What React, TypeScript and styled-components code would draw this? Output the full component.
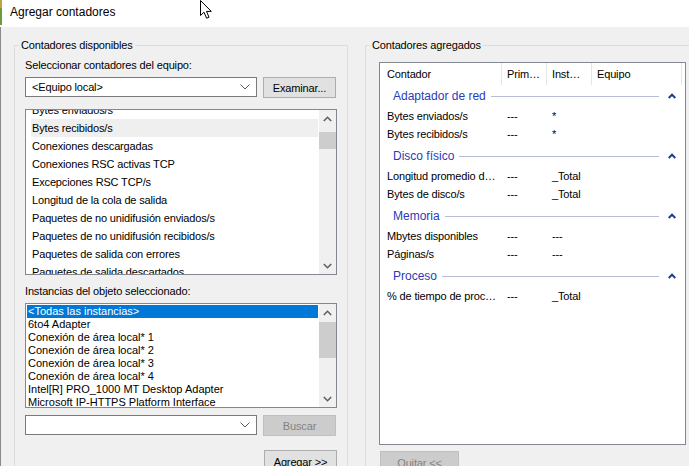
import React from "react";
import styled, { createGlobalStyle } from "styled-components";

const GlobalStyle = createGlobalStyle`
  html, body { margin: 0; padding: 0; background: #f0f0f0; overflow: hidden; }
  body { font-family: "Liberation Sans", Arial, sans-serif; font-size: 11px; color: #000; }
  * { box-sizing: border-box; }
`;

const Viewport = styled.div`
  position: relative;
  width: 689px;
  height: 466px;
  overflow: hidden;
  background: #f0f0f0;
`;

const Window = styled.div`
  width: 711px;
  display: flex;
  flex-direction: column;
`;

const TitleBar = styled.div`
  height: 27px;
  background: #ffffff;
  display: flex;
  align-items: flex-start;
`;

const DesktopEdge = styled.div`
  width: 2px;
  height: 25px;
  background: linear-gradient(#b9a53a 0 30%, #6f9a3c 30% 100%);
`;

const TitleText = styled.div`
  margin-left: 8px;
  padding-top: 5px;
  font-size: 12px;
  line-height: 15px;
  color: #000;
`;

const Body = styled.div`
  border-left: 1px solid #8a8a8a;
  padding: 11px 13px 0 13px;
  display: flex;
  align-items: flex-start;
  gap: 17px;
  min-height: 460px;
`;

const GroupBox = styled.fieldset<{ $w: number; $pl: number; $pt: number }>`
  margin: 0;
  min-width: 0;
  width: ${(p) => p.$w}px;
  border: 1px solid #dcdcdc;
  padding: ${(p) => p.$pt}px 10px 30px ${(p) => p.$pl}px;
  display: flex;
  flex-direction: column;
`;

const GroupLegend = styled.legend<{ $ml: number }>`
  padding: 0 2px;
  margin-left: ${(p) => p.$ml}px;
  line-height: 14px;
  font-size: 11px;
  letter-spacing: -0.15px;
`;

const FieldLabel = styled.div<{ $mt?: number }>`
  line-height: 14px;
  letter-spacing: -0.15px;
  margin-top: ${(p) => p.$mt ?? 0}px;
  margin-bottom: 5px;
`;

const ControlRow = styled.div<{ $mt?: number; $mb?: number }>`
  display: flex;
  align-items: flex-start;
  gap: 6px;
  margin-top: ${(p) => p.$mt ?? 0}px;
  margin-bottom: ${(p) => p.$mb ?? 0}px;
`;

const ComboBox = styled.div`
  width: 232px;
  height: 20px;
  background: #ffffff;
  border: 1px solid #7a7a7a;
  display: flex;
  align-items: center;
  justify-content: space-between;
  padding: 0 6px;
  letter-spacing: -0.15px;
`;

const Button = styled.div<{ $w: number; $h: number; $disabled?: boolean }>`
  width: ${(p) => p.$w}px;
  height: ${(p) => p.$h}px;
  background: ${(p) => (p.$disabled ? "#cccccc" : "#e1e1e1")};
  border: 1px solid ${(p) => (p.$disabled ? "#bfbfbf" : "#adadad")};
  color: ${(p) => (p.$disabled ? "#838383" : "#000")};
  display: flex;
  align-items: center;
  justify-content: center;
  letter-spacing: -0.15px;
  flex: none;
`;

const ButtonRow = styled.div<{ $mt: number; $align: "flex-start" | "flex-end"; $ml?: number }>`
  display: flex;
  justify-content: ${(p) => p.$align};
  margin-top: ${(p) => p.$mt}px;
  margin-left: ${(p) => p.$ml ?? 0}px;
`;

const ListBox = styled.div<{ $h: number }>`
  height: ${(p) => p.$h}px;
  background: #ffffff;
  border: 1px solid #828790;
  display: flex;
`;

const ListViewport = styled.div<{ $pad: number }>`
  flex: 1;
  overflow: hidden;
  padding: ${(p) => p.$pad}px 1px 0 1px;
`;

const ScrolledItems = styled.div<{ $offset: number }>`
  display: flex;
  flex-direction: column;
  transform: translateY(${(p) => -p.$offset}px);
`;

const CounterItem = styled.div<{ $hover?: boolean }>`
  height: 18px;
  line-height: 18px;
  margin-left: 4px;
  padding-left: 1px;
  letter-spacing: -0.15px;
  white-space: nowrap;
  background: ${(p) => (p.$hover ? "#efefef" : "transparent")};
`;

const InstanceItem = styled.div<{ $selected?: boolean }>`
  height: 13px;
  line-height: 13px;
  padding-left: 1px;
  white-space: nowrap;
  background: ${(p) => (p.$selected ? "#0078d7" : "transparent")};
  color: ${(p) => (p.$selected ? "#ffffff" : "#000")};
`;

const Scrollbar = styled.div`
  width: 17px;
  background: #f0f0f0;
  display: flex;
  flex-direction: column;
  flex: none;
`;

const ScrollArrow = styled.div`
  height: 17px;
  display: flex;
  align-items: center;
  justify-content: center;
  flex: none;
`;

const ScrollTrack = styled.div`
  flex: 1;
  display: flex;
  flex-direction: column;
`;

const ScrollThumb = styled.div<{ $top: number; $h: number }>`
  margin-top: ${(p) => p.$top}px;
  height: ${(p) => p.$h}px;
  background: #cdcdcd;
`;

const ListView = styled.div`
  height: 383px;
  background: #ffffff;
  border: 1px solid #828790;
  display: flex;
  flex-direction: column;
`;

const HeaderRow = styled.div`
  height: 22px;
  display: flex;
  flex: none;
`;

const HeaderCell = styled.div<{ $w: number; $pl: number }>`
  width: ${(p) => p.$w}px;
  padding-left: ${(p) => p.$pl}px;
  border-right: 1px solid #e5e5e5;
  display: flex;
  align-items: center;
  letter-spacing: -0.15px;
  white-space: nowrap;
  overflow: hidden;
`;

const GroupHeader = styled.div<{ $first?: boolean }>`
  height: 22px;
  margin-top: ${(p) => (p.$first ? 0 : 2)}px;
  display: flex;
  align-items: center;
  padding-left: 13px;
  padding-right: 9px;
`;

const GroupTitle = styled.span`
  font-size: 12px;
  color: #2b3bb8;
  white-space: nowrap;
`;

const GroupLine = styled.div`
  flex: 1;
  height: 1px;
  background: #b9bdd6;
  margin: 1px 9px 0 5px;
`;

const DataRow = styled.div`
  height: 18px;
  display: flex;
  align-items: center;
`;

const DataCell = styled.div<{ $w: number; $pl: number }>`
  width: ${(p) => p.$w}px;
  padding-left: ${(p) => p.$pl}px;
  letter-spacing: -0.15px;
  white-space: nowrap;
  overflow: hidden;
`;

const CursorLayer = styled.svg`
  position: absolute;
  left: 199px;
  top: -1px;
`;

const ChevronDown = () => (
  <svg width="10" height="6" viewBox="0 0 10 6">
    <polyline points="0.5,0.5 5,5 9.5,0.5" fill="none" stroke="#5a5a5a" strokeWidth="1" />
  </svg>
);

const ScrollUp = () => (
  <svg width="9" height="6" viewBox="0 0 9 6">
    <polyline points="0.8,5 4.5,1.3 8.2,5" fill="none" stroke="#606060" strokeWidth="1.6" />
  </svg>
);

const ScrollDown = () => (
  <svg width="9" height="6" viewBox="0 0 9 6">
    <polyline points="0.8,1 4.5,4.7 8.2,1" fill="none" stroke="#606060" strokeWidth="1.6" />
  </svg>
);

const Collapse = () => (
  <svg width="8" height="6" viewBox="0 0 8 6">
    <polyline points="0.8,5 4,1.6 7.2,5" fill="none" stroke="#1b3a94" strokeWidth="2" />
  </svg>
);

const counters = [
  "Bytes enviados/s",
  "Bytes recibidos/s",
  "Conexiones descargadas",
  "Conexiones RSC activas TCP",
  "Excepciones RSC TCP/s",
  "Longitud de la cola de salida",
  "Paquetes de no unidifusión enviados/s",
  "Paquetes de no unidifusión recibidos/s",
  "Paquetes de salida con errores",
  "Paquetes de salida descartados",
];

const instances = [
  "<Todas las instancias>",
  "6to4 Adapter",
  "Conexión de área local* 1",
  "Conexión de área local* 2",
  "Conexión de área local* 3",
  "Conexión de área local* 4",
  "Intel[R] PRO_1000 MT Desktop Adapter",
  "Microsoft IP-HTTPS Platform Interface",
];

const cols = [
  { w: 122, pl: 7 },
  { w: 45, pl: 5 },
  { w: 45, pl: 5 },
  { w: 90, pl: 5 },
];

const groups: { name: string; rows: [string, string, string][] }[] = [
  {
    name: "Adaptador de red",
    rows: [
      ["Bytes enviados/s", "---", "*"],
      ["Bytes recibidos/s", "---", "*"],
    ],
  },
  {
    name: "Disco físico",
    rows: [
      ["Longitud promedio d…", "---", "_Total"],
      ["Bytes de disco/s", "---", "_Total"],
    ],
  },
  {
    name: "Memoria",
    rows: [
      ["Mbytes disponibles", "---", "---"],
      ["Páginas/s", "---", "---"],
    ],
  },
  {
    name: "Proceso",
    rows: [["% de tiempo de proc…", "---", "_Total"]],
  },
];

export default function App() {
  return (
    <Viewport>
      <GlobalStyle />
      <Window>
        <TitleBar>
          <DesktopEdge />
          <TitleText>Agregar contadores</TitleText>
        </TitleBar>
        <Body>
          <GroupBox $w={334} $pl={10} $pt={6}>
            <GroupLegend $ml={-6}>Contadores disponibles</GroupLegend>
            <FieldLabel>Seleccionar contadores del equipo:</FieldLabel>
            <ControlRow $mb={11}>
              <ComboBox>
                <span>&lt;Equipo local&gt;</span>
                <ChevronDown />
              </ComboBox>
              <Button $w={73} $h={21}>Examinar...</Button>
            </ControlRow>
            <ListBox $h={166}>
              <ListViewport $pad={0}>
                <ScrolledItems $offset={9}>
                  {counters.map((c, i) => (
                    <CounterItem key={c} $hover={i === 1}>
                      {c}
                    </CounterItem>
                  ))}
                </ScrolledItems>
              </ListViewport>
              <Scrollbar>
                <ScrollArrow>
                  <ScrollUp />
                </ScrollArrow>
                <ScrollTrack>
                  <ScrollThumb $top={5} $h={17} />
                </ScrollTrack>
                <ScrollArrow>
                  <ScrollDown />
                </ScrollArrow>
              </Scrollbar>
            </ListBox>
            <FieldLabel $mt={9}>Instancias del objeto seleccionado:</FieldLabel>
            <ListBox $h={105}>
              <ListViewport $pad={1}>
                <ScrolledItems $offset={0}>
                  {instances.map((c, i) => (
                    <InstanceItem key={c} $selected={i === 0}>
                      {c}
                    </InstanceItem>
                  ))}
                </ScrolledItems>
              </ListViewport>
              <Scrollbar>
                <ScrollArrow>
                  <ScrollUp />
                </ScrollArrow>
                <ScrollTrack>
                  <ScrollThumb $top={1} $h={36} />
                </ScrollTrack>
                <ScrollArrow>
                  <ScrollDown />
                </ScrollArrow>
              </Scrollbar>
            </ListBox>
            <ControlRow $mt={7}>
              <ComboBox>
                <span />
                <ChevronDown />
              </ComboBox>
              <Button $w={73} $h={21} $disabled>
                Buscar
              </Button>
            </ControlRow>
            <ButtonRow $mt={14} $align="flex-end">
              <Button $w={73} $h={23}>Agregar &gt;&gt;</Button>
            </ButtonRow>
          </GroupBox>
          <GroupBox $w={332} $pl={13} $pt={10}>
            <GroupLegend $ml={-9}>Contadores agregados</GroupLegend>
            <ListView>
              <HeaderRow>
                <HeaderCell $w={cols[0].w} $pl={cols[0].pl}>Contador</HeaderCell>
                <HeaderCell $w={cols[1].w} $pl={cols[1].pl}>Prim…</HeaderCell>
                <HeaderCell $w={cols[2].w} $pl={cols[2].pl}>Inst…</HeaderCell>
                <HeaderCell $w={cols[3].w} $pl={cols[3].pl}>Equipo</HeaderCell>
              </HeaderRow>
              {groups.map((g, gi) => (
                <React.Fragment key={g.name}>
                  <GroupHeader $first={gi === 0}>
                    <GroupTitle>{g.name}</GroupTitle>
                    <GroupLine />
                    <Collapse />
                  </GroupHeader>
                  {g.rows.map((r) => (
                    <DataRow key={r[0]}>
                      {r.map((v, ci) => (
                        <DataCell key={ci} $w={cols[ci].w} $pl={cols[ci].pl}>
                          {v}
                        </DataCell>
                      ))}
                    </DataRow>
                  ))}
                </React.Fragment>
              ))}
            </ListView>
            <ButtonRow $mt={6} $align="flex-start" $ml={1}>
              <Button $w={79} $h={23} $disabled>
                Quitar &lt;&lt;
              </Button>
            </ButtonRow>
          </GroupBox>
        </Body>
      </Window>
      <CursorLayer width="16" height="22" viewBox="0 0 16 22">
        <path
          d="M1.5,1.5 L1.5,16.5 L5,13.2 L7.6,19.2 L10,18.2 L7.5,12.4 L12.3,12.4 Z"
          fill="#ffffff"
          stroke="#000000"
          strokeWidth="1"
          strokeLinejoin="miter"
        />
      </CursorLayer>
    </Viewport>
  );
}
